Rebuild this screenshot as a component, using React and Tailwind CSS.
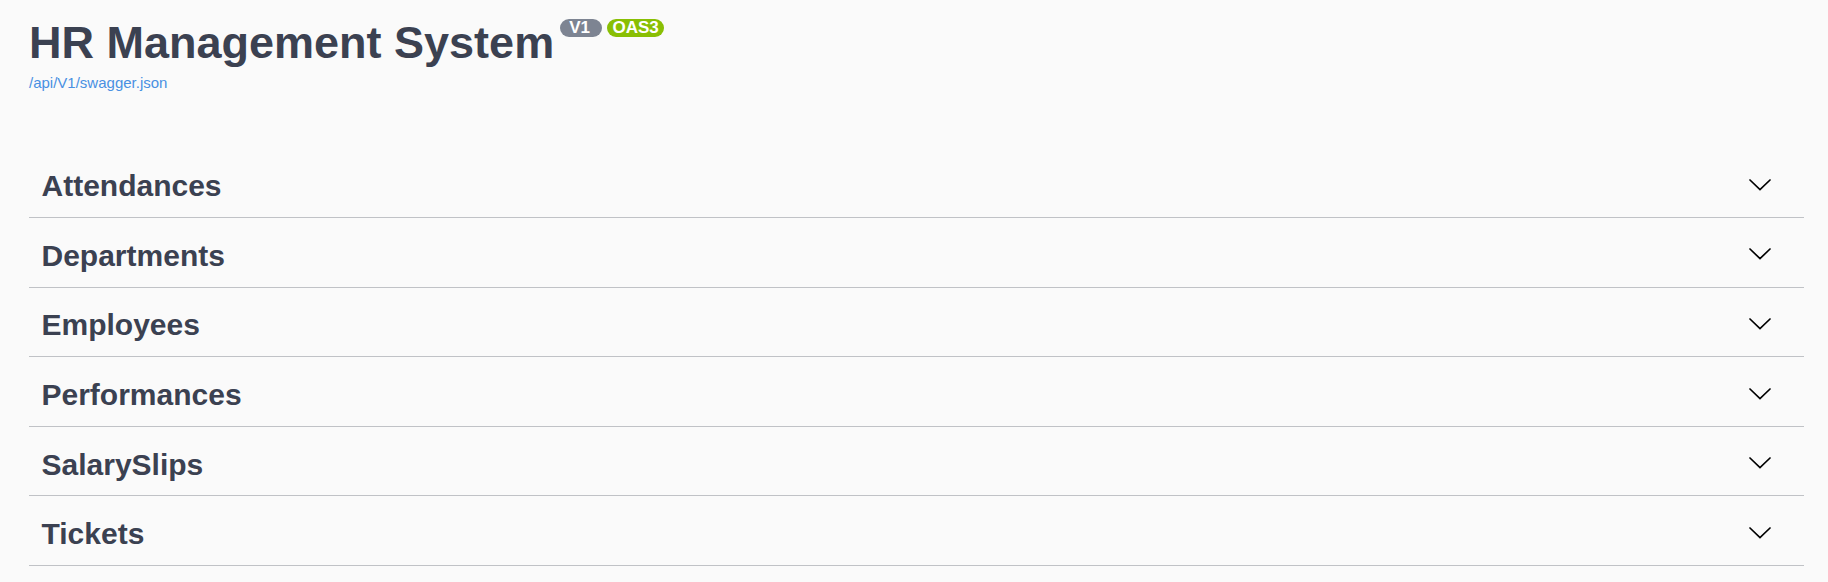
import React from 'react';

const tags = ['Attendances', 'Departments', 'Employees', 'Performances', 'SalarySlips', 'Tickets'];

function Chevron() {
  return (
    <svg width="22" height="12" viewBox="0 0 22 12" className="mb-[2px]">
      <path d="M1 1L11 10.6L21 1" fill="none" stroke="#000" strokeWidth="1.7" strokeLinecap="round" strokeLinejoin="miter" />
    </svg>
  );
}

export default function App() {
  return (
    <div className="min-h-[582px] w-full bg-[#fafafa] pl-[29px] pr-[24px] font-['Liberation_Sans',Arial,sans-serif] text-[#3b4151]">
      {/* Info header */}
      <div className="pt-[17px]">
        <div className="flex items-start">
          <h2 className="text-[45px] leading-[52px] font-bold">HR Management System</h2>
          <span className="ml-[6px] mt-[2px] flex h-[18px] w-[42px] items-center rounded-full bg-[#7d8492] pl-[9px] text-[17px] leading-[18px] font-bold text-white">
            V1
          </span>
          <span className="ml-[5px] mt-[2px] flex h-[18px] w-[57px] items-center justify-center rounded-full bg-[#89bf04] text-[17px] leading-[18px] font-bold text-white">
            OAS3
          </span>
        </div>
        <a href="#" className="mt-[5px] block text-[15px] leading-[17px] text-[#4990e2]">
          /api/V1/swagger.json
        </a>
      </div>

      {/* Tag sections */}
      <div className="mt-[63.5px]">
        {tags.map((t) => (
          <div
            key={t}
            className="mb-[6px] flex h-[63.6px] items-center justify-between border-b border-[rgba(59,65,81,0.3)] pl-[12.5px] pr-[33px]"
          >
            <h3 className="text-[30px] font-bold">{t}</h3>
            <Chevron />
          </div>
        ))}
      </div>
    </div>
  );
}
